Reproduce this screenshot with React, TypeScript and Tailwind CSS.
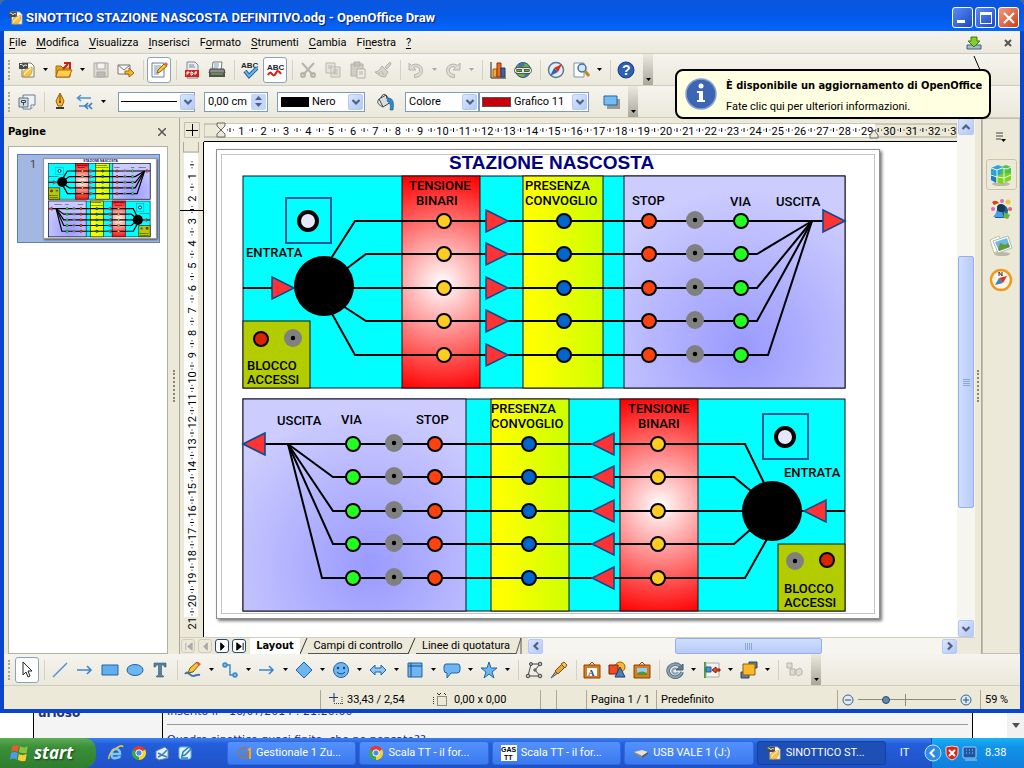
import { ReactNode } from "react"
import clsx from "clsx"

const ROWS = [45, 78, 112, 145, 179];

type Label = { x: number; y: number; text: string };

type Station = {
    dir: 1 | -1;
    lavender: [number, number];
    glow: [number, number];
    presence: [number, number];
    voltage: [number, number];
    dots: { yellow: number; blue: number; red: number; grey: number; green: number };
    arrow: number;
    exit: { tip: number; fan: number; bends: number[] };
    hub: [number, number];
    branches: number[][];
    entry: number;
    lamp: [number, number];
    block: { x: number; red: [number, number]; grey: [number, number] };
    labels: Label[];
};

const upper: Station = {
    dir: 1,
    lavender: [381, 221],
    glow: [500, 172],
    presence: [280, 80],
    voltage: [159, 78],
    dots: { yellow: 201, blue: 321, red: 406, grey: 452, green: 498 },
    arrow: 243,
    exit: { tip: 602, fan: 569, bends: [514, 514, 514, 525] },
    hub: [81, 110],
    branches: [[87, 84, 112], [103, 93, 123], [108, 112, 123], [100, 130, 123], [88, 136, 112]],
    entry: 29,
    lamp: [65, 45],
    block: { x: 0, red: [18, 163], grey: [50, 162] },
    labels: [
        { x: 166, y: 14, text: "TENSIONE" },
        { x: 173, y: 29, text: "BINARI" },
        { x: 282, y: 14, text: "PRESENZA" },
        { x: 282, y: 29, text: "CONVOGLIO" },
        { x: 389, y: 29, text: "STOP" },
        { x: 487, y: 30, text: "VIA" },
        { x: 533, y: 30, text: "USCITA" },
        { x: 3, y: 81, text: "ENTRATA" },
        { x: 4, y: 194, text: "BLOCCO" },
        { x: 4, y: 208, text: "ACCESSI" },
    ],
};

const lower: Station = {
    dir: -1,
    lavender: [0, 223],
    glow: [126, 168],
    presence: [248, 78],
    voltage: [377, 78],
    dots: { yellow: 415, blue: 286, red: 192, grey: 151, green: 110 },
    arrow: 371,
    exit: { tip: 0, fan: 45, bends: [90, 90, 90, 79] },
    hub: [529, 112],
    branches: [[522, 86, 502], [508, 92, 491], [502, 112, 491], [507, 131, 491], [524, 140, 502]],
    entry: 583,
    lamp: [542, 38],
    block: { x: 535, red: [584, 161], grey: [552, 162] },
    labels: [
        { x: 34, y: 26, text: "USCITA" },
        { x: 98, y: 25, text: "VIA" },
        { x: 173, y: 25, text: "STOP" },
        { x: 248, y: 14, text: "PRESENZA" },
        { x: 248, y: 29, text: "CONVOGLIO" },
        { x: 385, y: 14, text: "TENSIONE" },
        { x: 395, y: 29, text: "BINARI" },
        { x: 541, y: 78, text: "ENTRATA" },
        { x: 541, y: 194, text: "BLOCCO" },
        { x: 541, y: 208, text: "ACCESSI" },
    ],
};

const Arrow = ({ x, y, dir }: { x: number; y: number; dir: number }) => (
    <path d={`M${x} ${y - 11}L${x + 22 * dir} ${y}L${x} ${y + 11}Z`} fill="#ff3333" stroke="#0f4a8c" strokeWidth="1.6" />
)

const Dot = ({ x, y, fill }: { x: number; y: number; fill: string }) => (
    <circle cx={x} cy={y} r="7" fill={fill} stroke="#000" strokeWidth="2" />
)

const GreyDot = ({ x, y }: { x: number; y: number }) => (
    <g>
        <circle cx={x} cy={y} r="9" fill="#808080" />
        <circle cx={x} cy={y} r="2.2" fill="#000" />
    </g>
)

const StationPanel = ({ s, id, x, y, line }: { s: Station; id: string; x: number; y: number; line: number }) => {
    const last = s.exit.fan;
    return (
        <g transform={`translate(${x} ${y})`}>
            <defs>
                <radialGradient id={id + "-lav"} gradientUnits="userSpaceOnUse" cx={s.glow[0]} cy={s.glow[1]} r="160">
                    <stop offset="0" stopColor="#9a9aff" />
                    <stop offset="1" stopColor="#ccccff" />
                </radialGradient>
                <radialGradient id={id + "-red"} gradientUnits="userSpaceOnUse" cx={s.voltage[0] + 40} cy="107" r="112">
                    <stop offset="0" stopColor="#fff" />
                    <stop offset="1" stopColor="#ff0000" />
                </radialGradient>
                <linearGradient id={id + "-yel"} x1="0" y1="0.55" x2="1" y2="0.45">
                    <stop offset="0.1" stopColor="#ffff00" />
                    <stop offset="1" stopColor="#ccff00" />
                </linearGradient>
            </defs>
            <g stroke="#112" strokeWidth={line / 2}>
                <rect width="602" height="212" fill="#00ffff" />
                <rect x={s.lavender[0]} width={s.lavender[1]} height="212" fill={`url(#${id}-lav)`} />
                <rect x={s.presence[0]} width={s.presence[1]} height="212" fill={`url(#${id}-yel)`} />
                <rect x={s.voltage[0]} width={s.voltage[1]} height="212" fill={`url(#${id}-red)`} />
                <rect x={s.block.x} y="145" width="67" height="67" fill="#b3cc00" />
            </g>
            <g stroke="#000" strokeWidth={line} fill="none">
                {ROWS.map((ry, i) => {
                    const [bx, by, bend] = s.branches[i];
                    const out = i === 0 ? `H${s.exit.tip}` : `H${s.exit.bends[i - 1]}L${last} 45`;
                    return <path key={ry} d={`M${bx} ${by}L${bend} ${ry}${out}`} />
                })}
                <path d={`M${s.dir === 1 ? 0 : 602} 112H${s.hub[0]}`} />
            </g>
            <circle cx={s.hub[0]} cy={s.hub[1]} r="30" />
            <Arrow x={s.entry} y={112} dir={s.dir} />
            <Arrow x={s.exit.tip - 22 * s.dir} y={45} dir={s.dir} />
            <rect x={s.lamp[0] - 22} y={s.lamp[1] - 23} width="45" height="45" fill="none" stroke="#0f5a9a" strokeWidth="2" />
            <circle cx={s.lamp[0]} cy={s.lamp[1]} r="9" fill="#e6e6ff" stroke="#000" strokeWidth="4" />
            {ROWS.map(ry => (
                <g key={ry}>
                    <Dot x={s.dots.yellow} y={ry} fill="#ffcc22" />
                    <Arrow x={s.arrow} y={ry} dir={s.dir} />
                    <Dot x={s.dots.blue} y={ry} fill="#0066cc" />
                    <Dot x={s.dots.red} y={ry} fill="#ff420e" />
                    <GreyDot x={s.dots.grey} y={ry - 1} />
                    <Dot x={s.dots.green} y={ry} fill="#23ff23" />
                </g>
            ))}
            <Dot x={s.block.red[0]} y={s.block.red[1]} fill="#dc2300" />
            <GreyDot x={s.block.grey[0]} y={s.block.grey[1]} />
            <g fontFamily="Roboto, sans-serif" fontSize="13" fontWeight="500">
                {s.labels.map(l => <text key={l.text} x={l.x} y={l.y}>{l.text}</text>)}
            </g>
        </g>
    )
}

const PageDrawing = ({ id, className, line = 2 }: { id: string; className: string; line?: number }) => (
    <svg viewBox="0 0 662 468" className={className}>
        <rect x="4.5" y="4.5" width="653" height="459" fill="#fff" stroke="#c4c4c4" />
        <text x="232" y="19" fontFamily="Liberation Sans, sans-serif" fontSize="19" fontWeight="700" fill="#000080">STAZIONE NASCOSTA</text>
        <StationPanel s={upper} id={id + "-up"} x={26} y={26} line={line} />
        <StationPanel s={lower} id={id + "-low"} x={26} y={249} line={line} />
    </svg>
)

const docIcon = (
    <>
        <path d="M4 2h9l3 3v11H4z" fill="#fdfdf8" stroke="#7a7a70" />
        <path d="M1 2h9v6H1z" fill="#4a4a4a" />
        <path d="M2 3.500c2-.5 3 .5 3.500 2 .5-1.500 2-2 3.500-1" stroke="#fff" fill="none" />
        <path d="M5 15V11c2-4 5-3 9-5 1 5-1 10-6 10z" fill="#f7c24a" stroke="#c78a12" strokeWidth=".6" />
        <path d="M6 14c1-4 4-4 7-7" stroke="#fff3c8" fill="none" strokeWidth="1.200" />
    </>
)

// 18x18 glyphs of the toolbars
const ICONS: Record<string, ReactNode> = {
    doc: docIcon,
    open: <><path d="M1 5h5l2 2h7v9H1z" fill="#e8a21a" stroke="#a8690a" /><path d="M3 9h14l-3 7H1z" fill="#ffcf4d" stroke="#a8690a" /><path d="M8 8l5-5M9 2h6v6" stroke="#c8230f" strokeWidth="2" fill="none" /></>,
    save: <g stroke="#aaa" fill="#dcdad2"><path d="M2 2h14v14H2z" /><path d="M5 2h8v6H5z" fill="#f4f3ee" /><path d="M5 11h8v5H5z" fill="#bdbbb4" /></g>,
    mail: <><path d="M1 4h12v9H1z" fill="#f6f6f6" stroke="#777" /><path d="M1 4l6 5 6-5" fill="none" stroke="#777" /><path d="M8 10h4V7l5 5-5 4v-3H8z" fill="#f7b52c" stroke="#9b6a0b" /></>,
    edit: <><path d="M2 2h12v14H2z" fill="#fff" stroke="#6b7e95" /><path d="M4 5h7M4 7h6M4 9h4M4 11h3M4 13h5" stroke="#7b93ad" /><path d="M7 12l1-3 6-6 3 2-7 6z" fill="#f6c62c" stroke="#8e6310" /><path d="M14 3l2-2 2 2-1 2z" fill="#e2665a" /></>,
    pdf: <><path d="M4 1h8l3 3v13H4z" fill="#e9edf2" stroke="#7c8a99" /><path d="M6 4h5M6 6h6" stroke="#7c8a99" /><path d="M2 9h14v7H2z" fill="#d8201a" /><path d="M4 14v-3h2v1H4M8 11v3h1l1-1v-1l-1-1zM12 14v-3h2M12 12h2" stroke="#fff" fill="none" /></>,
    print: <><path d="M5 1h9l-1 8H4z" fill="#fff" stroke="#777" /><path d="M6 3h5M6 5h5M5 7h5" stroke="#6d9bc3" /><path d="M2 8h14l1 4H1z" fill="#8b8d8a" stroke="#444" /><path d="M1 12h16v4H1z" fill="#4f534e" /><path d="M3 13h12" stroke="#8fc15b" /></>,
    spell: <><text x="0" y="7" fontSize="8" fontWeight="700" fontFamily="Liberation Sans, sans-serif" fill="#222">ABC</text><path d="M4 10l4 5 8-8" fill="none" stroke="#245f9e" strokeWidth="4" /><path d="M4 10l4 5 8-8" fill="none" stroke="#6cb4ee" strokeWidth="2" /></>,
    autospell: <><text x="1" y="9" fontSize="8" fontWeight="700" fontFamily="Liberation Sans, sans-serif" fill="#222">ABC</text><path d="M2 14q2-4 4-1t4-1 5 1" fill="none" stroke="#d8231c" strokeWidth="2.2" /></>,
    cut: <g stroke="#b5b3ab" fill="none" strokeWidth="2"><path d="M3 2l11 12M15 2L4 14" /><circle cx="4" cy="14" r="2" /><circle cx="14" cy="14" r="2" /></g>,
    copy: <g stroke="#b9b7af" fill="#e6e4da"><path d="M2 2h9v10H2zM7 6h9v10H7z" /><path d="M4 5h4M4 7h3M9 9h5M9 11h5M9 13h5" /></g>,
    paste: <g stroke="#b2b0a8" fill="#cfcdc4"><path d="M2 3h12v12H2zM5 1h6v4H5z" /><path d="M8 8h8v9H8z" fill="#eeece4" /><path d="M10 11h4M10 13h4" /></g>,
    brush: <g stroke="#b2b0a8" fill="#d5d3ca"><path d="M11 6l5-5 1 2-4 5z" /><path d="M8 5l6 6-3 5c-4 0-7-2-10-5 3 0 5-3 7-6z" /><path d="M4 11l2 2M7 10l3 4" /></g>,
    undo: <path d="M2 2v7h7L6.500 6.500c3-2 7 0 6 4-1 2-3 3-5 3v3c5 0 8-3 8-7 0-6-7-8-11-5z" fill="#dddbd2" stroke="#b5b3ab" />,
    redo: <path d="M16 2v7H9l2.500-2.500c-3-2-7 0-6 4 1 2 3 3 5 3v3c-5 0-8-3-8-7 0-6 7-8 11-5z" fill="#dddbd2" stroke="#b5b3ab" />,
    chart: <><path d="M2 1v16h15" stroke="#222" fill="none" /><path d="M4 8h4v8H4z" fill="#f7a92b" stroke="#a05a08" /><path d="M8 2h4v14H8z" fill="#f26a1d" stroke="#8c3205" /><path d="M12 7h4v9h-4z" fill="#3a65a5" stroke="#1c3a6e" /></>,
    globe: <><circle cx="9" cy="9" r="7.500" fill="#6fae4a" stroke="#2f4f70" /><path d="M4 4c2-2 5-3 7-2l-1 3-4 2zM12 11l4-1-2 5-4 1z" fill="#3f74ac" /><rect x="1.500" y="7.500" width="8" height="4" rx="2" fill="none" stroke="#444" strokeWidth="2.600" /><rect x="8.500" y="7.500" width="8" height="4" rx="2" fill="none" stroke="#444" strokeWidth="2.600" /><rect x="1.500" y="7.500" width="8" height="4" rx="2" fill="none" stroke="#f0f0ea" strokeWidth="1.200" /><rect x="8.500" y="7.500" width="8" height="4" rx="2" fill="none" stroke="#f0f0ea" strokeWidth="1.200" /></>,
    compass: <><circle cx="9" cy="9" r="7.500" fill="#e4ecf4" stroke="#5b7796" strokeWidth="1.500" /><path d="M15 3L7 7l4 4z" fill="#e02a1c" /><path d="M3 15l4-8 4 4z" fill="#2c63b4" /></>,
    find: <><path d="M2 2h10v14H2z" fill="#fff" stroke="#7b93ad" /><circle cx="10" cy="7" r="4" fill="#cfe6f8" stroke="#4a6e92" strokeWidth="1.500" /><path d="M13 10l4 5" stroke="#b9892e" strokeWidth="3" /></>,
    help: <><circle cx="9" cy="9" r="8" fill="#2d5fb4" stroke="#183f86" /><text x="5" y="14" fontSize="14" fontWeight="700" fontFamily="Liberation Sans, sans-serif" fill="#fff">?</text></>,
    styles: <><path d="M5 2h12v10l-4 4H5z" fill="#eef2f6" stroke="#6a7e92" /><path d="M13 16v-4h4" fill="#fff" stroke="#6a7e92" /><path d="M1 5h9v9H1z" fill="#d3dce4" stroke="#5c6f82" /><path d="M3.500 7.500h4v2h-4zM5.500 9.500v3" fill="none" stroke="#33475b" /></>,
    pen: <><path d="M9 0l4 8-2 5H7L5 8z" fill="#fbb829" stroke="#8f5d06" /><path d="M9 2v7" stroke="#6b4300" /><circle cx="9" cy="9" r="1" fill="#4b3000" /><path d="M5 14h8v2H5z" fill="#33383d" /></>,
    arrowStyle: <g stroke="#4a94d8" fill="none" strokeWidth="1.600"><path d="M1 5h14M5 2L1.500 5 5 8M3 13h9" /><path d="M16 10l-3 3 3 3M12 10l-3 3 3 3" stroke="#3b78b4" /></g>,
    bucket: <><path d="M3 6l7-4 5 7-8 5z" fill="#d8dde2" stroke="#444" /><path d="M3 6c-3 4 0 6 4 8" fill="none" stroke="#444" /><path d="M5 5c1-5 6-5 6 1" stroke="#333" fill="none" /><path d="M12 5c6 0 6 6 5 12h-3c1-5 0-7-3-9z" fill="#2f86c9" stroke="#1d5a8c" strokeWidth=".6" /></>,
    shadow: <><path d="M5 6h13v10H5z" fill="#9c9a92" /><path d="M2 3h13v9H2z" fill="#74bdf4" stroke="#23679f" /></>,
    pointer: <path d="M5 1v13l3-3 2 5 2-1-2-5h4z" fill="#fff" stroke="#222" />,
    line: <path d="M2 16L16 2" stroke="#4d92cf" strokeWidth="1.500" />,
    arrow: <path d="M1 9h14M11 5l4 4-4 4" fill="none" stroke="#3a86cf" strokeWidth="1.600" />,
    rect: <path d="M1 4h16v10H1z" fill="#62aff0" stroke="#2064a4" />,
    ellipse: <ellipse cx="9" cy="9" rx="8" ry="5.500" fill="#6db6f2" stroke="#2064a4" />,
    type: <path d="M3 2h12v4h-1.500l-1-2H10.500v10l2 1v1h-7v-1l2-1V4H5.500l-1 2H3z" fill="#56809f" stroke="#355a76" strokeWidth=".6" />,
    pencil: <><path d="M1 13c3-4 5 2 8 2s4-2 7-1" stroke="#3777b4" strokeWidth="2" fill="none" /><path d="M4 12l2-5 7-6 3 2-7 8z" fill="#f8c431" stroke="#7d5608" /><path d="M12 2l2-1 3 2-2 2z" fill="#e35a4a" /></>,
    connector: <g stroke="#3a86cf" fill="#7bbaf0" strokeWidth="1.400"><path d="M5 4h4v10h4" fill="none" /><circle cx="4" cy="4" r="2" /><circle cx="14" cy="14" r="2" /></g>,
    diamond: <path d="M9 1l8 8-8 8-8-8z" fill="#6db6f2" stroke="#2064a4" />,
    smile: <><circle cx="9" cy="9" r="7.500" fill="#6db6f2" stroke="#2064a4" /><circle cx="6" cy="7" r="1.200" fill="#15497c" /><circle cx="12" cy="7" r="1.200" fill="#15497c" /><path d="M5 11q4 4 8 0" stroke="#15497c" fill="none" /></>,
    doubleArrow: <path d="M1 9l5-5v3h6V4l5 5-5 5v-3H6v3z" fill="#8cc6f6" stroke="#2064a4" />,
    flow: <><path d="M2 2h14v14H2z" fill="#6db6f2" stroke="#2064a4" /><path d="M5 2v14M2 5h14" stroke="#174f86" /></>,
    callout: <path d="M3 3h12q2 0 2 3v3q0 3-3 3H8l-4 5v-5q-3 0-3-3V6q0-3 2-3z" fill="#6db6f2" stroke="#2064a4" />,
    star: <path d="M9 1l2 6h6l-5 4 2 6-5-4-5 4 2-6-5-4h6z" fill="#6db6f2" stroke="#2064a4" />,
    points: <g fill="#b4bec8" stroke="#444"><path d="M3 15L6 3h9L10 9l5 6z" fill="none" /><circle cx="3" cy="15" r="1.800" /><circle cx="6" cy="3" r="1.500" /><circle cx="15" cy="3" r="1.800" /><circle cx="15" cy="15" r="1.800" /><circle cx="10" cy="9" r="1.200" /></g>,
    glue: <><path d="M1 17l5-7 2 2z" fill="#9aa" stroke="#555" /><path d="M5 10l7-7 3 3-7 7z" fill="#e5a63b" stroke="#7b5210" /><path d="M11 3l3-2 3 3-2 3z" fill="#f6c65a" stroke="#7b5210" /></>,
    fontwork: <><path d="M1 4h16v13H1z" fill="#d97b1e" stroke="#8a440a" /><path d="M4 7h10v8H4z" fill="#fff" /><path d="M6 4l3-3 3 3" fill="none" stroke="#8a440a" /><text x="5" y="15" fontSize="9" fontWeight="700" fontFamily="Liberation Serif, serif" fill="#1d3f70">A</text></>,
    shapes: <><circle cx="12" cy="6" r="5" fill="#fbb829" stroke="#9b6408" /><path d="M1 4h9v9H1z" fill="#ef4c23" stroke="#7d1c06" /><path d="M12 6l5 10H7z" fill="#4a7fb8" stroke="#1c3a6e" /></>,
    gallery: <><path d="M1 4h16v13H1z" fill="#d97b1e" stroke="#8a440a" /><path d="M4 7h10v7H4z" fill="#8fd0f5" /><path d="M4 12q5-3 10 0v2H4z" fill="#4e9a2c" /><path d="M6 4l3-3 3 3" fill="none" stroke="#8a440a" /></>,
    rotate: <><path d="M14 5a7 6.500 0 1 0 2 6" fill="none" stroke="#4d657c" strokeWidth="3.600" /><path d="M14 5a7 6.500 0 1 0 2 6M11 8a3 2.500 0 1 0 1 3" fill="none" stroke="#8ba2b6" strokeWidth="2" /><path d="M10 9h7V3z" fill="#5f7f9c" stroke="#3f5870" /></>,
    align: <><path d="M2 1v16" stroke="#3ea23a" strokeWidth="2" /><path d="M3 2h13v14H3z" fill="#f4f4ee" stroke="#aaa" /><path d="M3 6h5v5H3z" fill="#4a94d8" stroke="#1f5892" /><path d="M9 9l4-3v2h4v2h-4v2z" fill="#ef4c23" stroke="#8c1d05" /></>,
    arrange: <><path d="M9 1h8v6H9zM1 11h8v6H1z" fill="#5d7c99" stroke="#2e4660" /><path d="M3 3h12v11H3z" fill="#fbb829" stroke="#8f5d06" /></>,
    extrude: <g fill="#dedcd3" stroke="#b5b3ab"><path d="M2 2h5v5H2zM5 8h5v6H5zM11 9l4-2 2 2v4l-4 2-2-2z" /></g>,
};

const Icon = ({ name, className = "size-[18px]" }: { name: string; className?: string }) => (
    <svg viewBox="0 0 18 18" className={className} aria-hidden="true">{ICONS[name]}</svg>
)

const Caret = ({ faded = false }: { faded?: boolean }) => (
    <svg viewBox="0 0 5 3" className="h-[3px] w-[5px]"><path d="M0 0h5L2.500 3z" fill={faded ? "#aaa" : "#000"} /></svg>
)

// "|" is a separator, a trailing "+" adds a drop-down arrow, a leading "*" marks a pressed button
const TOP_BAR = ["doc+", "open+", "save", "mail", "|", "*edit", "|", "pdf", "print", "|", "spell", "*autospell", "|", "cut", "copy", "paste", "brush", "|", "undo+", "redo+", "|", "chart", "globe", "|", "compass", "find+", "|", "help"];
const DRAW_BAR = ["*pointer", "|", "line", "arrow", "rect", "ellipse", "type", "|", "pencil+", "connector+", "arrow+", "diamond+", "smile+", "doubleArrow+", "flow+", "callout+", "star+", "|", "points", "glue", "|", "fontwork", "shapes", "gallery", "|", "rotate+", "align+", "arrange+", "|", "extrude"];

const Tool = ({ item }: { item: string }) => {
    if(item === "|") return <span className="ml-1 mr-0.5 h-5 w-px shrink-0 bg-[#d5d2c4]" />
    const name = item.replace(/[*+]/g, "");
    const pressed = item.startsWith("*");
    return (
        <span className="flex shrink-0 items-center">
            <button aria-label={name} className={clsx("flex h-[26px] w-6 items-center justify-center rounded-[3px]", pressed && "border border-[#8ba3b8] bg-white")}>
                <Icon name={name} />
            </button>
            {item.endsWith("+") && (
                <button aria-label={name + " menu"} className="flex h-6 w-3 items-center justify-center">
                    <Caret faded={name === "undo" || name === "redo"} />
                </button>
            )}
        </span>
    )
}

const Grip = () => (
    <span className="ml-1 mr-1 h-5 w-0.5 shrink-0 border-l-2 border-dotted border-[#a9a698]" />
)

const Overflow = () => (
    <button aria-label="Altri comandi" className="ml-1 flex h-full w-[10px] shrink-0 items-end justify-center bg-linear-to-b from-[#eceade] to-[#a9a79b] pb-1">
        <Caret />
    </button>
)

const BAR = "flex shrink-0 items-center gap-px border-b border-[#d0cdbe] bg-linear-to-b from-[#f5f4ee] to-[#ebe8db]";
const BOLD = "font-['DejaVu_Sans_Condensed','DejaVu_Sans',sans-serif] font-bold";

const Chevron = ({ turn = "", box = "size-[15px]" }: { turn?: string; box?: string }) => (
    <span className={clsx("flex shrink-0 items-center justify-center rounded-[2px] border border-[#b6c8f4] bg-linear-to-br from-[#dbe6fe] to-[#b4c8f6]", box)}>
        <svg viewBox="0 0 10 10" className={clsx("size-[10px]", turn)}><path d="M1.500 3l3.500 3.500L8.500 3" fill="none" stroke="#4d6185" strokeWidth="2.200" /></svg>
    </span>
)

const Combo = ({ label, value, width, children }: { label: string; value: string; width: string; children?: ReactNode }) => (
    <label className={clsx("flex h-5 shrink-0 items-center border border-[#7f9db9] bg-white pr-px", width)}>
        {children}
        <select aria-label={label} className="min-w-0 flex-1 appearance-none bg-transparent pl-[3px] outline-none" defaultValue={value}>
            <option>{value}</option>
        </select>
        <Chevron box="h-4 w-[15px]" />
    </label>
)

const Menu = () => {
    const items = [["", "F", "ile"], ["", "M", "odifica"], ["", "V", "isualizza"], ["", "I", "nserisci"], ["F", "o", "rmato"], ["", "S", "trumenti"], ["", "C", "ambia"], ["Fi", "n", "estra"], ["", "?", ""]];
    return (
        <nav className="flex h-[23px] shrink-0 items-center gap-2.5 border-b border-[#d0cdbe] bg-linear-to-b from-[#f5f4ee] to-[#ebe8db] px-[5px] pt-0.5">
            {items.map(([a, b, c]) => <button key={b + c}>{a}<u className="underline-offset-2">{b}</u>{c}</button>)}
            <button aria-label="Aggiornamento" className="ml-auto mr-3">
                <svg viewBox="0 0 16 14" className="h-[14px] w-4"><path d="M1 9h14v4H1z" fill="#9dbbd3" stroke="#44617b" /><path d="M5 1h6v4h3l-6 6-6-6h3z" fill="#86cc2b" stroke="#3d7a0c" /></svg>
            </button>
            <button aria-label="Chiudi documento">
                <svg viewBox="0 0 8 8" className="mr-[3px] size-2"><path d="M1 1l6 6M7 1L1 7" stroke="#555" strokeWidth="2" /></svg>
            </button>
        </nav>
    )
}

const TitleBar = () => (
    <header className="flex h-[31px] shrink-0 items-center gap-[2px] rounded-t-lg bg-linear-to-b from-[#0a55dc] via-[#0359e8] to-[#0566fb] pl-2 pr-[5px] pt-1">
        <Icon name="doc" className="size-4" />
        <h1 className="flex-1 truncate text-[13px] font-bold leading-5 text-white [text-shadow:1px_1px_1px_#0a1883]">SINOTTICO STAZIONE NASCOSTA DEFINITIVO.odg - OpenOffice Draw</h1>
        <button aria-label="Riduci a icona" className="flex size-[21px] items-end rounded-[3px] border border-white bg-linear-to-br from-[#5c8df2] to-[#1b47c8] p-1">
            <span className="h-[3px] w-2 bg-white" />
        </button>
        <button aria-label="Ingrandisci" className="flex size-[21px] items-center justify-center rounded-[3px] border border-white bg-linear-to-br from-[#5c8df2] to-[#1b47c8]">
            <span className="size-3 border border-t-[3px] border-white" />
        </button>
        <button aria-label="Chiudi" className="flex size-[21px] items-center justify-center rounded-[3px] border border-white bg-linear-to-br from-[#f09a7c] to-[#cc3a10]">
            <svg viewBox="0 0 12 12" className="size-3"><path d="M1 1l10 10M11 1L1 11" stroke="#fff" strokeWidth="2.200" /></svg>
        </button>
    </header>
)

const FormatBar = () => (
    <div className={clsx(BAR, "h-8")}>
        <Grip />
        <Tool item="styles" />
        <Tool item="|" />
        <Tool item="pen" />
        <Tool item="arrowStyle+" />
        <span className="flex items-center gap-[9px] pl-2">
            <Combo label="Stile linea" value="" width="w-[77px]"><span className="ml-0.5 h-px w-14 shrink-0 bg-black" /></Combo>
            <label className="flex h-5 w-16 items-center border border-[#7f9db9] bg-white pr-px">
                <input aria-label="Spessore linea" className="w-0 flex-1 pl-[3px] outline-none" defaultValue="0,00 cm" />
                <span className="flex h-4 w-[15px] flex-col items-center justify-center gap-[3px] rounded-[2px] bg-[#c6d5fa]">
                    <svg viewBox="0 0 7 4" className="h-1 w-[7px]"><path d="M0 4l3.500-4L7 4z" fill="#4d6185" /></svg>
                    <svg viewBox="0 0 7 4" className="h-1 w-[7px]"><path d="M0 0l3.500 4L7 0z" fill="#4d6185" /></svg>
                </span>
            </label>
            <Combo label="Colore linea" value="Nero" width="w-[88px]"><span className="ml-[3px] h-[10px] w-7 shrink-0 bg-black" /></Combo>
        </span>
        <span className="w-1.5" />
        <Tool item="bucket" />
        <span className="w-1.5" />
        <span className="flex">
            <Combo label="Tipo riempimento" value="Colore" width="w-[74px]" />
            <Combo label="Colore riempimento" value="Grafico 11" width="w-[110px]"><span className="ml-0.5 h-[10px] w-[29px] shrink-0 border border-[#555] bg-[#c5000b]" /></Combo>
        </span>
        <span className="w-2" />
        <Tool item="shadow" />
        <Overflow />
    </div>
)

const PagesPane = () => (
    <aside className="flex w-[164px] shrink-0 flex-col bg-[#ece9d8] pl-1">
        <div className="flex h-7 shrink-0 items-center justify-between pr-0.5">
            <h2 className={BOLD}>Pagine</h2>
            <button aria-label="Chiudi riquadro">
                <svg viewBox="0 0 8 8" className="size-2"><path d="M0 0l8 8M8 0L0 8" stroke="#555" strokeWidth="1.500" /></svg>
            </button>
        </div>
        <div className="min-h-0 flex-1 border border-[#b3b0a2] bg-white px-2 pt-[7px]">
            <div className="flex h-[89px] w-[143px] gap-2 border border-[#5c7fbf] bg-[#a2b8e2] pl-3 pt-[3px]">
                <span className="w-[5px] shrink-0 text-[#444]">1</span>
                <div className="h-[81px] w-[114px] border border-[#999] bg-white shadow-[1px_1px_2px_#555]">
                    <PageDrawing id="thumb" className="h-full w-full" line={7} />
                </div>
            </div>
        </div>
    </aside>
)

const Splitter = ({ width }: { width: string }) => (
    <div className={clsx("flex shrink-0 items-center justify-center border-r border-[#aca899] bg-[#ece9d8]", width)}>
        <span className="h-8 border-l-2 border-dotted border-[#8a8778]" />
    </div>
)

const CM = 22.35;

const HorizontalRuler = () => (
    <svg className="h-6 min-w-0 flex-1 bg-[#ece9d8] text-[11px]">
        <rect x="0" y="6" width="100%" height="13" fill="#ece9d8" stroke="#aca899" />
        <rect x="18" y="6" width="653" height="13" fill="#fff" />
        {Array.from({ length: 34 }, (_, n) => {
            const x = 15 + n * CM;
            return (
                <g key={n}>
                    {n > 0 && <text x={x} y="17" textAnchor="middle">{n}</text>}
                    <path d={`M${x + 8} 12h1M${x + 11} 10v4M${x + 14} 12h1`} stroke="#000" />
                </g>
            )
        })}
        <path d="M13 5h8v3l-4 4 4 4v3h-8v-3l4-4-4-4z" fill="#ece9d8" stroke="#666" />
        <path d="M666 20v-3l4-5 4 5v3z" fill="#ece9d8" stroke="#666" />
        <path d="M0 23.500h2000" stroke="#000" />
    </svg>
)

const VerticalRuler = () => (
    <svg className="h-full w-6 shrink-0 bg-[#ece9d8] text-[11px]">
        <rect x="3.500" y="-1" width="15" height="11" fill="#ece9d8" stroke="#aca899" />
        <rect x="4" y="11" width="14" height="464" fill="#fff" />
        {Array.from({ length: 21 }, (_, i) => {
            const y = 12 + (i + 1) * CM;
            return (
                <g key={i}>
                    <text transform={`translate(16 ${y}) rotate(-90)`} textAnchor="middle">{i + 1}</text>
                    <path d={`M12 ${y - 9}v1M10 ${y - 11.500}h4M12 ${y - 15}v1`} stroke="#000" />
                </g>
            )
        })}
        <path d="M0 68.500h24" stroke="#000" />
        <path d="M23.500 0v2000" stroke="#000" />
    </svg>
)

const SheetTabs = () => {
    const nav = ["M10 2L5 6l5 4zM3 2v8", "M8 2L4 6l4 4z", "M4 2l4 4-4 4z", "M3 2l5 4-5 4zM10 2v8"];
    return (
        <div className="flex h-[17px] shrink-0 items-stretch border-t border-[#d0cdbe] bg-[#ece9d8]">
            <div className="flex items-center gap-[3px] pl-px">
                {nav.map((d, i) => (
                    <button key={d} aria-label={["Prima", "Precedente", "Successiva", "Ultima"][i]} className={clsx("flex size-[14px] items-center justify-center rounded-[3px] border", i > 1 ? "border-[#1f4a7c] bg-white" : "border-[#cfccbd]")}>
                        <svg viewBox="0 0 12 12" className="size-[11px]"><path d={d} fill={i > 1 ? "#000" : "#aaa"} stroke={i > 1 ? "#000" : "#aaa"} /></svg>
                    </button>
                ))}
            </div>
            <div className="flex w-[282px] shrink-0 items-stretch pl-1 leading-4">
                <button className={clsx(BOLD, "w-[50px] bg-white")}>Layout</button>
                {["Campi di controllo", "Linee di quotatura"].map(t => (
                    <span key={t} className="flex items-stretch">
                        <svg viewBox="0 0 8 16" className="h-4 w-2"><path d="M0 16L7 0" stroke="#333" /></svg>
                        <button className="w-[100px] whitespace-nowrap border-b border-[#555]">{t}</button>
                    </span>
                ))}
                <svg viewBox="0 0 8 16" className="h-4 w-2"><path d="M0 16L5 0v16" fill="none" stroke="#555" /></svg>
            </div>
            <div className="flex min-w-0 flex-1 items-center bg-[#f6f5f0]">
                <Chevron turn="rotate-90" />
                <div className="flex h-full flex-1">
                    <span className="w-[33%]" />
                    <span className="flex w-[37%] items-center justify-center gap-px rounded-[2px] border border-[#98b0e8] bg-linear-to-b from-[#cfdefe] to-[#b8cbf8]">
                        {[0, 1, 2, 3].map(i => <i key={i} className="h-[7px] w-px bg-[#8ba6dd]" />)}
                    </span>
                </div>
                <Chevron turn="-rotate-90" />
            </div>
            <span className="w-[18px]" />
        </div>
    )
}

const Workspace = () => (
    <main className="flex min-w-0 flex-1 flex-col">
        <div className="flex min-h-0 flex-1">
            <div className="flex min-w-0 flex-1 flex-col">
                <div className="flex h-6 shrink-0">
                    <div className="flex w-6 shrink-0 items-center justify-center bg-[#ece9d8]">
                        <svg viewBox="0 0 16 16" className="size-4"><path d="M.5.500h15v15H.5z" fill="none" stroke="#c2bfb0" /><path d="M2 8.500h12M8.500 2v12" stroke="#000" /></svg>
                    </div>
                    <HorizontalRuler />
                </div>
                <div className="flex min-h-0 flex-1 overflow-hidden bg-white">
                    <VerticalRuler />
                    <div className="min-w-0 flex-1 overflow-hidden pl-3 pt-[7px]">
                        <div className="w-[664px] border border-[#8f8f8f] bg-white shadow-[2px_2px_3px_#777]">
                            <PageDrawing id="page" className="h-[468px] w-[662px]" />
                        </div>
                    </div>
                </div>
            </div>
            <div className="flex w-[18px] shrink-0 flex-col items-center bg-[#f6f5f0]">
                <Chevron turn="rotate-180" box="h-[17px] w-4" />
                <div className="flex w-4 flex-1 flex-col">
                    <span className="h-[25%]" />
                    <span className="flex h-[52%] flex-col items-center justify-center gap-px rounded-[2px] border border-[#98b0e8] bg-linear-to-r from-[#cfdefe] to-[#b8cbf8]">
                        {[0, 1, 2, 3].map(i => <i key={i} className="h-px w-[7px] bg-[#8ba6dd]" />)}
                    </span>
                </div>
                <Chevron box="h-[17px] w-4" />
            </div>
        </div>
        <SheetTabs />
    </main>
)

const Sidebar = () => (
    <aside className="flex w-[38px] shrink-0 flex-col items-center gap-1 border border-[#c2bfb0] bg-[#ece9d8] pt-2">
        <button aria-label="Impostazioni" className="mb-2 flex h-5 w-7 items-center justify-center">
            <svg viewBox="0 0 12 12" className="size-3"><path d="M1 2h7M1 5h7M1 8h5" stroke="#444" /><path d="M6 8h5l-2.500 3z" /></svg>
        </button>
        <button aria-label="Proprietà" className="flex size-[31px] items-center justify-center rounded-[3px] border border-[#cbc5a8]">
            <svg viewBox="0 0 24 24" className="size-6">
                <ellipse cx="12" cy="21" rx="9" ry="2" fill="#bbb8aa" />
                <path d="M2 5l7-3 5 2v8l-7 3-5-2z" fill="#2ba4dc" />
                <path d="M12 4l5-2 5 2v7l-6 2-4-2z" fill="#4cc24a" />
                <path d="M2 11l5 2v7l-5-3z" fill="#1e7cc4" />
                <path d="M7 13l6-2 9-1v7l-9 4-6-2z" fill="#7ed321" />
                <path d="M2 5l6 2 5-2 5 1 4-2M8 7v13M2 12l6 2 7 1 7-3M15 6v14" stroke="#e9f7e3" fill="none" />
            </svg>
        </button>
        <button aria-label="Stili" className="flex size-[31px] items-center justify-center">
            <svg viewBox="0 0 24 24" className="size-6">
                <path d="M6 20L9 8q8-3 10 4l-1 8z" fill="#1d5c9e" />
                <path d="M4 19l7-9 4 9z" fill="#4aa0e6" />
                <circle cx="12" cy="10" r="4" fill="#143a4e" />
                <path d="M15 14l6 3-2 4-4-1z" fill="#6fb536" />
                <path d="M3 4q4-3 7 1l-5 2z" fill="#d4481c" />
                <g fill="#d86bc4"><circle cx="13" cy="3" r="2" /><circle cx="4" cy="11" r="2" /></g>
                <circle cx="19" cy="4" r="2.500" fill="#f4c33c" />
                <circle cx="21" cy="11" r="2" fill="#e8605e" />
            </svg>
        </button>
        <button aria-label="Galleria" className="flex size-[31px] items-center justify-center">
            <svg viewBox="0 0 24 24" className="size-6">
                <ellipse cx="13" cy="21" rx="8" ry="2" fill="#bbb8aa" />
                <path d="M1 7l9-4 4 12-9 5z" fill="#fff" stroke="#b8c4a8" />
                <path d="M4 8l15-5 4 12-14 5z" fill="#fff" stroke="#b8b8b0" />
                <path d="M6 9l12-4 3 9-11 4z" fill="#6fb9e8" />
                <path d="M9 16l2-6 5 2 3-2 2 4-11 4z" fill="#5d9a34" />
            </svg>
        </button>
        <button aria-label="Navigatore" className="flex size-[31px] items-center justify-center">
            <svg viewBox="0 0 24 24" className="size-6">
                <circle cx="12" cy="12" r="10" fill="#fbf6ea" stroke="#f09a1c" strokeWidth="2.500" />
                <path d="M18 8l-8 2 4 5z" fill="#dc3220" />
                <path d="M6 17l4-7 4 5z" fill="#3f7fc4" />
                <path d="M10 8V4l3 4V4" fill="none" stroke="#333" />
            </svg>
        </button>
    </aside>
)

const CELL = "flex h-[19px] shrink-0 items-center border-l border-[#aca899] pl-1";

const StatusBar = () => (
    <footer className="flex h-[23px] shrink-0 items-center bg-[#ece9d8] pt-1">
        <span className="w-[316px] shrink-0" />
        <span className={clsx(CELL, "w-[112px] gap-1 pl-2")}>
            <svg viewBox="0 0 14 14" className="size-[14px]"><path d="M5 0v9M0 4.500h9" stroke="#237" /><path d="M5 10.500h9M13 4v7" stroke="#444" strokeDasharray="1 1" /></svg>
            33,43 / 2,54
        </span>
        <span className="flex w-[108px] shrink-0 items-center gap-1.5">
            <svg viewBox="0 0 16 14" className="h-[14px] w-4"><path d="M5.500 3.500h9v9h-9zM1.500 4v8" stroke="#333" fill="none" strokeDasharray="1 1" /><path d="M5 0l2 2M9 0L7 2M12 0l2 2" stroke="#333" /></svg>
            0,00 x 0,00
        </span>
        <span className={clsx(CELL, "w-4")} />
        <span className={clsx(CELL, "w-[30px]")} />
        <span className={clsx(CELL, "w-[70px]")}>Pagina 1 / 1</span>
        <span className={clsx(CELL, "min-w-0 flex-1")}>Predefinito</span>
        <span className={clsx(CELL, "w-[143px] gap-1")}>
            <button aria-label="Riduci zoom">
                <svg viewBox="0 0 12 12" className="size-3"><circle cx="6" cy="6" r="5" fill="#dcebf7" stroke="#3d6285" /><path d="M3 6h6" stroke="#264a6c" /></svg>
            </button>
            <input type="range" aria-label="Zoom" defaultValue={27} className="h-3 w-[98px] appearance-none bg-[linear-gradient(to_right,transparent_47px,#8d8a7c_47px,#8d8a7c_48px,transparent_48px),linear-gradient(to_bottom,transparent_5px,#8d8a7c_5px,#8d8a7c_6px,transparent_6px)] [&::-webkit-slider-thumb]:size-2 [&::-webkit-slider-thumb]:appearance-none [&::-webkit-slider-thumb]:rounded-full [&::-webkit-slider-thumb]:border [&::-webkit-slider-thumb]:border-[#27496b] [&::-webkit-slider-thumb]:bg-[#6289ab]" />
            <button aria-label="Aumenta zoom">
                <svg viewBox="0 0 12 12" className="size-3"><circle cx="6" cy="6" r="5" fill="#dcebf7" stroke="#3d6285" /><path d="M3 6h6M6 3v6" stroke="#264a6c" /></svg>
            </button>
        </span>
        <span className={clsx(CELL, "w-10")}>59 %</span>
    </footer>
)

const Balloon = () => (
    <div role="status" className="absolute right-[33px] top-[69px] flex h-[50px] w-[316px] items-center gap-[9px] rounded-lg border-2 border-black bg-[#ffffe1] pl-2">
        <svg viewBox="0 0 10 15" className="absolute -top-[15px] right-[6px] h-[15px] w-[10px]"><path d="M1 0l6 14" stroke="#000" /></svg>
        <svg viewBox="0 0 32 32" className="size-8 shrink-0">
            <circle cx="16" cy="16" r="15" fill="#3c65b4" stroke="#8aa0cc" strokeWidth="1.500" />
            <circle cx="16" cy="8" r="2.500" fill="#fff" />
            <path d="M12 13h6v9h2v2h-8v-2h2v-7h-2z" fill="#fff" />
        </svg>
        <div className="whitespace-nowrap pt-1 leading-[21px]">
            <p className={BOLD}>È disponibile un aggiornamento di OpenOffice</p>
            <p>Fate clic qui per ulteriori informazioni.</p>
        </div>
    </div>
)

// strip of the forum page that shows below the window
const ForumStrip = () => (
    <div className="flex h-[25px] shrink-0 overflow-hidden bg-white font-['DejaVu_Sans',sans-serif] text-[11px] leading-[14px] text-[#1f2f7a]">
        <div className="w-[33px] shrink-0" />
        <div className="w-[130px] shrink-0 border-x border-black bg-[#f4f4f4] pl-1">
            <p className="-mt-[7px] text-[12px] font-bold">urioso</p>
        </div>
        <div className="min-w-0 flex-1 border-r border-black bg-[#f4f4f4] px-1">
            <p className="-mt-[8px] border-b border-[#999] pb-[5px]">Inserito il - 16/07/2014 : 21:20:00</p>
            <p className="mt-2">Quadro sinottico quasi finito, che ne pensate??</p>
        </div>
        <div className="w-[34px] shrink-0" />
        <div className="flex w-[17px] shrink-0 items-center justify-center bg-[#f1f1f1]">
            <svg viewBox="0 0 8 5" className="h-[5px] w-2"><path d="M0 0h8L4 5z" fill="#505050" /></svg>
        </div>
    </div>
)

const Chrome = () => (
    <svg viewBox="0 0 16 16" className="size-4 shrink-0">
        <path d="M8 8L1.900 4.500A7 7 0 0 1 14.100 4.500z" fill="#e33b2e" />
        <path d="M8 8l6.100-3.500A7 7 0 0 1 8 15z" fill="#f9d423" />
        <path d="M8 8v7A7 7 0 0 1 1.900 4.500z" fill="#3aa648" />
        <circle cx="8" cy="8" r="3.200" fill="#4a8af4" stroke="#fff" />
    </svg>
)

const TASKS: { title: string; icon: ReactNode; active?: boolean }[] = [
    { title: "Gestionale 1 Zu...", icon: <svg viewBox="0 0 16 16" className="size-4 shrink-0"><path d="M11 4a5 5 0 1 0 1 7V8H8" fill="none" stroke="#8a7a70" strokeWidth="2" /><path d="M12 5l2-1v10" fill="none" stroke="#f6a81c" strokeWidth="2" /></svg> },
    { title: "Scala TT - il for...", icon: <Chrome /> },
    { title: "Scala TT - il for...", icon: <svg viewBox="0 0 16 16" className="size-4 shrink-0"><rect width="16" height="16" fill="#fff" /><g fontFamily="Liberation Sans, sans-serif" fontSize="7" fontWeight="700"><text x="0" y="7">GAS</text><text x="3" y="15">TT</text></g></svg> },
    { title: "USB VALE 1 (J:)", icon: <svg viewBox="0 0 16 16" className="size-4 shrink-0"><path d="M1 7l8-2 6 2-6 4z" fill="#e4e1d6" /><path d="M1 7l8 4v2L1 9z" fill="#8c8778" /><path d="M9 11l6-4v2l-6 4z" fill="#5d5a50" /></svg> },
    { title: "SINOTTICO ST...", icon: <Icon name="doc" className="size-4 shrink-0" />, active: true },
];

const Taskbar = () => (
    <div className="flex h-[30px] shrink-0 items-stretch bg-linear-to-b from-[#3a80f0] via-[#245edb] via-20% to-[#1f52c8] text-white">
        <button className="flex w-24 shrink-0 items-center gap-1 rounded-r-xl bg-linear-to-b from-[#5eac56] via-[#3a9038] via-30% to-[#2f7d30] pl-[10px] font-['Open_Sans',sans-serif] text-[17px] font-bold italic [text-shadow:1px_1px_2px_#123d12]">
            <svg viewBox="0 0 18 18" className="size-5">
                <path d="M2 3q3-2 6 0L7 8Q4 6 1 8z" fill="#ea5a2a" />
                <path d="M9 3q4 2 7 0l-1 6q-4 1-7-1z" fill="#86c440" />
                <path d="M1 9q3-2 6 0l-1 6q-3-2-6 0z" fill="#4a9cf0" />
                <path d="M8 10q3 2 7 0l-1 6q-4 1-7-1z" fill="#f9cf2e" />
            </svg>
            start
        </button>
        <div className="flex w-[131px] shrink-0 items-center gap-[7px] pl-3">
            <svg viewBox="0 0 16 16" className="size-4"><path d="M3 9h9q0-5-4-5t-4.500 5 4.500 4q3 0 4-2" fill="none" stroke="#7cc8fa" strokeWidth="2.600" /><path d="M1 14Q0 9 7 4t8-2" fill="none" stroke="#f6c62c" strokeWidth="1.500" /></svg>
            <Chrome />
            <svg viewBox="0 0 16 16" className="size-4"><path d="M2 6l9-4 3 3v8l-9 2-3-2z" fill="#e8f1fa" stroke="#5d89b8" /><path d="M4 8l4 2 5-5M4 12l4-2 5 2" stroke="#3a78bd" strokeWidth="1.500" fill="none" /></svg>
            <svg viewBox="0 0 16 16" className="size-4"><rect x="2" y="2" width="12" height="12" rx="2" fill="#e6f3fc" stroke="#6eb3e2" /><path d="M5 11l1-4 6-5 2 2-6 6zM4 13h7" stroke="#2b7cc0" fill="none" strokeWidth="1.500" /></svg>
        </div>
        <div className="flex min-w-0 flex-1 items-center gap-[3px]">
            {TASKS.map((t, i) => (
                <button key={i} className={clsx("flex h-6 min-w-0 flex-1 items-center gap-1 rounded-[3px] border pl-2", t.active ? "border-[#173f9c] bg-[#1e4fb4]" : "border-[#3068e0] bg-linear-to-b from-[#5591fb] to-[#3a7af0]")}>
                    {t.icon}
                    <span className="truncate">{t.title}</span>
                </button>
            ))}
        </div>
        <span className="flex w-[45px] shrink-0 items-center justify-center pr-2">IT</span>
        <div className="flex w-[93px] shrink-0 items-center gap-[3px] border-l border-[#0b53b6] bg-linear-to-b from-[#19b3f4] via-[#1292e8] via-30% to-[#0f80dc]">
            <button aria-label="Mostra icone nascoste" className="-ml-2 shrink-0">
                <svg viewBox="0 0 18 18" className="size-[18px]"><circle cx="9" cy="9" r="8" fill="#2e8be8" stroke="#bfe2fb" /><path d="M10.500 5L6.500 9l4 4" fill="none" stroke="#fff" strokeWidth="2" /></svg>
            </button>
            <svg viewBox="0 0 14 16" className="h-4 w-[14px] shrink-0"><path d="M1 2l6-1 6 1v6q0 5-6 7-6-2-6-7z" fill="#d8281c" stroke="#f4d0cc" /><path d="M4 5l6 6M10 5l-6 6" stroke="#fff" strokeWidth="2" /></svg>
            <svg viewBox="0 0 16 16" className="size-4 shrink-0"><rect x="1" y="2" width="13" height="11" rx="1" fill="#1c56a4" stroke="#a9cdf0" /><path d="M4 5h1M7 5h1M10 5h1M4 8h1M7 8h1M10 8h1M3 15h12" stroke="#9fd0fa" /></svg>
            <span className="pl-1">8.38</span>
        </div>
    </div>
)

export default function App() {
    return (
        <div className="flex h-screen flex-col overflow-hidden bg-[#3a6ea5] font-[Roboto,'Liberation_Sans',sans-serif] text-[11px] leading-[14px] text-black">
            <div className="relative flex min-h-0 flex-1 flex-col rounded-t-lg bg-[#0a45d0]">
                <TitleBar />
                <div className="mx-1 mb-1 flex min-h-0 flex-1 flex-col bg-[#ece9d8]">
                    <Menu />
                    <div className={clsx(BAR, "h-8")}>
                        <Grip />
                        {TOP_BAR.map((item, i) => <Tool key={i} item={item} />)}
                        <Overflow />
                    </div>
                    <FormatBar />
                    <div className="flex min-h-0 flex-1">
                        <PagesPane />
                        <Splitter width="w-3" />
                        <Workspace />
                        <Splitter width="w-[7px]" />
                        <Sidebar />
                    </div>
                    <div className={clsx(BAR, "h-8")}>
                        <Grip />
                        {DRAW_BAR.map((item, i) => <Tool key={i} item={item} />)}
                        <Overflow />
                    </div>
                    <StatusBar />
                </div>
                <Balloon />
            </div>
            <ForumStrip />
            <Taskbar />
        </div>
    )
}
